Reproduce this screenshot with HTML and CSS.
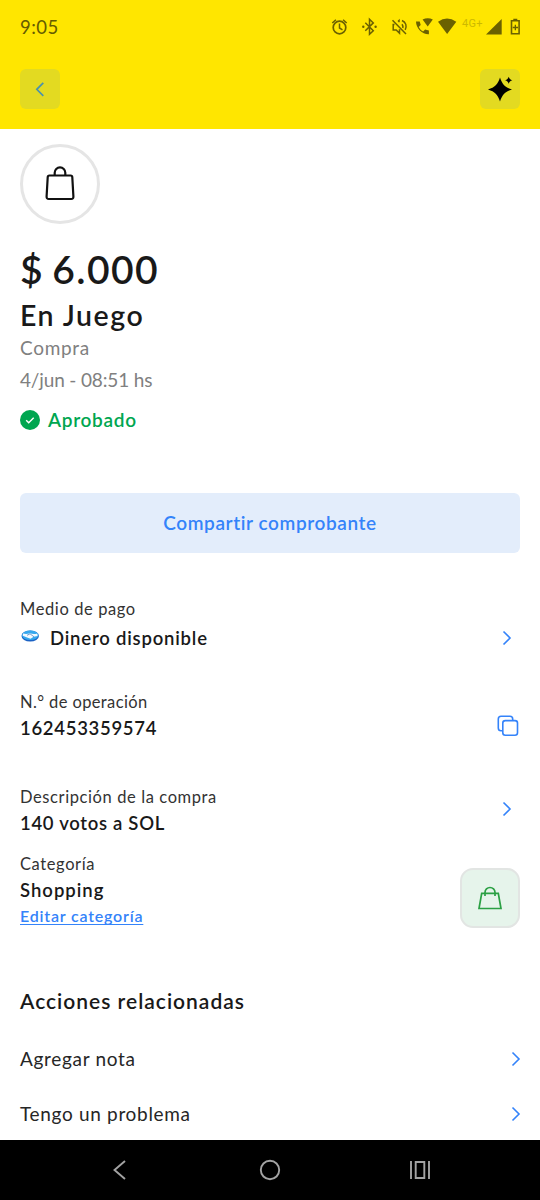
FILE: index.html
```
<!DOCTYPE html>
<html lang="es">
<head>
<meta charset="utf-8">
<title>Detalle de compra</title>
<link rel="stylesheet" href="styles.css">
</head>
<body>
<header class="top">
  <div class="status">
    <span class="clock">9:05</span>
    <svg class="status-icons" width="196" height="24" viewBox="330 15 196 24">
      <g fill="none" stroke="#6b6100" stroke-width="1.7">
        <circle cx="339.5" cy="27.5" r="6.3"/>
        <path d="M332.3 23l3.6-3.3M346.700 23l-3.600-3.300M339.500 23.500v4.500l3 1.800" stroke-width="1.5"/>
        <path d="M365.300 22.700l8 8-3.800 3.600V19.300l3.800 3.600-8 7.800" stroke-width="1.500"/>
        <path d="M392.500 20.200l13.500 13.800M394.500 24.500h-1.300v5.500h3l3.300 3.300v-4M399 22.300V20.500l-1 1M402 24.300q1.300 1.700.8 3.700M402 20.500c4 1.600 5.100 5.600 3.200 9.400" stroke-width="1.500"/>
        <path d="M511.500 20.700h7.600v13h-7.600z" stroke-width="1.600"/>
      </g>
      <g fill="#6b6100">
        <circle cx="363.300" cy="26.800" r="1.200"/><circle cx="375.600" cy="26.800" r="1.200"/>
        <path d="M416 21.500h3.700l1 3.500-2 2q1.500 3 4.400 4.600l2-2 3.800 1v3.600C422.500 34.500 416 28.500 416 21.500z"/>
        <path d="M422.600 19.600q5.200-2.800 10.200 0L427.700 26.500z"/>
        <path d="M438 21.800q9-6.800 18.300 0L447.100 34z"/>
        <path d="M486 34.500L501.700 19v15.500z"/>
        <path d="M513.300 18.800h4v2h-4zM514.700 24.800h1.300v2h2v1.400h-2v2h-1.300v-2h-2v-1.400h2z"/>
      </g>
      <text class="net" x="462" y="27">4G+</text>
    </svg>
  </div>
  <div class="toolbar">
    <div class="tool"><svg width="40" height="40" viewBox="0 0 40 40"><path d="M23.300 13.800L16.800 20.300l6.500 6.500" fill="none" stroke="#4a92ad" stroke-width="1.700"/></svg></div>
    <div class="tool"><svg width="40" height="40" viewBox="0 0 40 40"><path d="M20 8.500C22.300 15.500 25 18.200 32 20.500 25 22.800 22.300 25.500 20 32.500 17.700 25.500 15 22.800 8 20.500 15 18.200 17.700 15.500 20 8.500zM28.700 7.800c1 2.300 1.300 2.600 3.600 3.500-2.300.9-2.600 1.200-3.600 3.500-1-2.300-1.300-2.600-3.600-3.500 2.300-.9 2.600-1.200 3.600-3.500z" fill="#000"/></svg></div>
  </div>
</header>
<main class="content">
  <div class="avatar"><svg width="36" height="40" viewBox="0 0 36 40"><g fill="none" stroke="#111" stroke-width="2.200"><path d="M7.400 11.500h21.200q1.600 0 1.700 1.800l1.100 19.200q.1 2.500-2.200 2.500H6.800q-2.300 0-2.200-2.500l1.100-19.200q.1-1.800 1.700-1.800z"/><path d="M12.700 11.500V8.700a5.300 5.300 0 0 1 10.600 0v2.800"/></g></svg></div>
  <h1 class="amount">$ 6.000</h1>
  <h2 class="merchant">En Juego</h2>
  <p class="meta kind">Compra</p>
  <p class="meta date">4/jun - 08:51 hs</p>
  <p class="state"><svg width="20" height="20" viewBox="0 0 20 20"><circle cx="10" cy="10" r="10" fill="#00a650"/><path d="M6.200 10.300l2.500 2.500 5-5" fill="none" stroke="#fff" stroke-width="1.400"/></svg><span>Aprobado</span></p>
  <button class="share"><span>Compartir comprobante</span></button>

  <section class="row payment">
    <div>
      <p class="label l-pay">Medio de pago</p>
      <p class="value v-pay"><svg width="20" height="14" viewBox="0 0 20 14"><ellipse cx="10.200" cy="7" rx="8.700" ry="5.600" fill="#1b62c4"/><ellipse cx="10.200" cy="6.300" rx="8.200" ry="4.800" fill="#35a8ee"/><path d="M3 4.500q3.500 1 7-.3 3.500 1.300 7.300.2l.3 2.600-4 .8-3 2-3.500-1.200-4.300-1.800z" fill="#f2f9ff"/><path d="M7 6.300l3-1.500 4 3" fill="none" stroke="#3977bd" stroke-width=".7"/></svg><span>Dinero disponible</span></p>
    </div>
    <svg class="chev" width="10" height="16" viewBox="0 0 10 16"><path d="M1.500 1.500L8 8l-6.500 6.500"/></svg>
  </section>
  <section class="row operation">
    <div>
      <p class="label l-op">N.° de operación</p>
      <p class="value v-op">162453359574</p>
    </div>
    <svg class="copy" width="22" height="22" viewBox="0 0 22 22"><path d="M5.500 15.800H4q-2.700 0-2.700-2.700V4Q1.300 1.300 4 1.300h9q2.700 0 2.700 2.700v1.300"/><rect x="5.800" y="5.600" width="14.700" height="14.700" rx="2.500"/></svg>
  </section>
  <section class="row purchase">
    <div>
      <p class="label l-desc">Descripción de la compra</p>
      <p class="value v-desc">140 votos a SOL</p>
    </div>
    <svg class="chev" width="10" height="16" viewBox="0 0 10 16"><path d="M1.500 1.500L8 8l-6.500 6.500"/></svg>
  </section>
  <section class="row category">
    <div>
      <p class="label l-cat">Categoría</p>
      <p class="value v-cat">Shopping</p>
      <a class="edit">Editar categoría</a>
    </div>
    <div class="cat-icon"><svg width="26" height="26" viewBox="0 0 26 26"><g fill="none" stroke="#2ba044" stroke-width="1.700"><path d="M4.700 8.300h16.600L24 23.500H2z"/><path d="M8 11V7.500a5 5 0 0 1 10 0V11"/></g></svg></div>
  </section>
  <h3 class="related">Acciones relacionadas</h3>
  <section class="action first"><span class="a-note">Agregar nota</span><svg class="chev" width="10" height="16" viewBox="0 0 10 16"><path d="M1.500 1.500L8 8l-6.500 6.500"/></svg></section>
  <section class="action"><span class="a-help">Tengo un problema</span><svg class="chev" width="10" height="16" viewBox="0 0 10 16"><path d="M1.500 1.500L8 8l-6.500 6.500"/></svg></section>
</main>
<nav class="nav">
  <svg width="24" height="24" viewBox="0 0 24 24"><path d="M17 3L6.500 12 17 21"/></svg>
  <svg width="24" height="24" viewBox="0 0 24 24"><circle cx="12" cy="12" r="9.200"/></svg>
  <svg width="24" height="24" viewBox="0 0 24 24"><path d="M3 3v18M21 3v18M7.700 4h8.600v16H7.700z"/></svg>
</nav>
</body>
</html>
```
FILE: styles.css
```
* { box-sizing: border-box; margin: 0; padding: 0; }
body { width: 540px; height: 1200px; display: flex; flex-direction: column; background: #fff; color: #191919; font-family: Lato, "Open Sans", sans-serif; overflow: hidden; }
svg { display: block; flex: none; }
p, span, h1, h2, h3, a { white-space: nowrap; }

.top { height: 129px; padding: 0 20px; background: #ffe600; flex: none; }
.status { height: 54px; display: flex; justify-content: space-between; margin-right: -6px; align-items: center; }
.clock { font-size: 18.5px; line-height: 52px; color: #665c00; letter-spacing: .5px; }
.net { font: 400 11px Roboto, sans-serif; fill: #cdb900; letter-spacing: .3px; }
.toolbar { display: flex; justify-content: space-between; margin-top: 15px; }
.tool { width: 40px; height: 40px; border-radius: 6px; background: #e3da21; }

.content { flex: 1; min-height: 0; padding: 15px 20px 0; display: flex; flex-direction: column; }
.avatar { width: 80px; height: 80px; border: 3px solid #e5e5e5; border-radius: 50%; display: flex; align-items: center; justify-content: center; flex: none; }
.amount { margin-top: 21px; font-size: 39px; line-height: 48px; font-weight: 600; letter-spacing: 1.4px; word-spacing: -2.8px; }
.merchant { margin-top: 4px; font-size: 28.5px; line-height: 36px; font-weight: 600; letter-spacing: 1.5px; }
.meta { font-size: 19px; line-height: 26px; color: #808080; }
.kind { margin-top: 2px; letter-spacing: .7px; }
.date { margin-top: 6px; letter-spacing: -.15px; }
.state { margin-top: 14px; display: flex; align-items: center; gap: 8px; font-size: 19px; line-height: 26px; font-weight: 600; color: #00a650; letter-spacing: .7px; }
.share { margin-top: 59.5px; height: 60px; flex: none; border: 0; border-radius: 6px; background: #e3edfb; color: #3483fa; font: 600 19px/26px Lato, sans-serif; letter-spacing: .6px; }
.share span { display: block; padding-top: 1px; }

.row { display: flex; justify-content: space-between; }
.label { font-size: 16.5px; line-height: 22px; color: #333; letter-spacing: .6px; }
.value { font-size: 18.5px; line-height: 26px; font-weight: 600; letter-spacing: .7px; }
.chev, .copy { fill: none; stroke: #3483fa; stroke-width: 1.600; }
.payment { margin-top: 45.5px; }
.v-pay { margin-top: 5px; display: flex; gap: 10px; letter-spacing: .8px; }
.v-pay svg { margin-top: 4px; }
.payment .chev { margin: 31.5px 8px 0 0; }
.operation { margin-top: 39.5px; }
.l-op { letter-spacing: .38px; }
.v-op, .v-desc, .v-cat { margin-top: 2px; }
.v-cat { letter-spacing: 1px; }
.copy { margin: 24px 1px 0 0; }
.purchase { margin-top: 45px; }
.purchase .chev { margin: 15.5px 8px 0 0; }
.category { margin-top: 17.500px; }
.edit { display: block; margin-top: 2px; font-size: 16px; line-height: 22px; color: #3483fa; font-weight: 600; letter-spacing: .8px; text-decoration: underline; text-decoration-skip-ink: none; text-underline-offset: 2px; }
.cat-icon { margin-top: 14.500px; width: 60px; height: 60px; border: 2px solid #e2e5e3; border-radius: 13px; background: #e6f4eb; display: flex; align-items: center; justify-content: center; }
.related { margin-top: 59.5px; font-size: 21px; line-height: 28px; font-weight: 600; letter-spacing: 1px; }
.action { margin-top: 29px; display: flex; justify-content: space-between; align-items: center; font-size: 19px; line-height: 26px; color: #262626; letter-spacing: .68px; }
.first { margin-top: 31px; }
.action .chev { margin-right: -1px; }

.nav { height: 60px; flex: none; padding: 0 108px; background: #000; display: flex; align-items: center; justify-content: space-between; }
.nav svg { fill: none; stroke: #a3a3a3; stroke-width: 1.900; }
```
